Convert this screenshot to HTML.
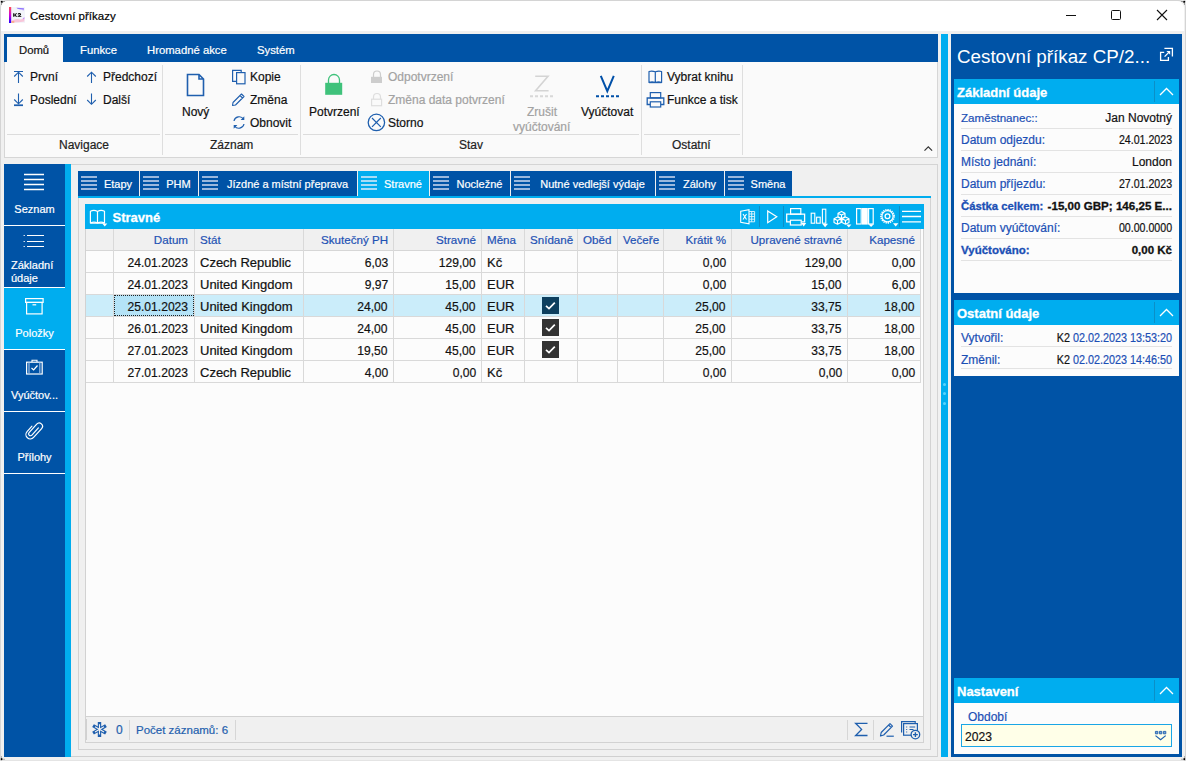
<!DOCTYPE html>
<html><head><meta charset="utf-8">
<style>
*{margin:0;padding:0;box-sizing:border-box}
html,body{width:1186px;height:761px;overflow:hidden;background:#ececec;font-family:"Liberation Sans",sans-serif;color:#111}
.a{position:absolute}
.t{position:absolute;white-space:nowrap;font-size:12px;line-height:14px;-webkit-text-stroke:0.2px currentColor}
.w{color:#fff}
.db{background:#0053a6}
.lb{background:#00adef}
svg{position:absolute;overflow:visible}
</style></head><body>
<!-- window frame -->
<div class="a" style="left:0;top:0;width:1186px;height:761px;background:#e9e9e9"></div>
<div class="a" style="left:0;top:0;width:1186px;height:761px;border:1px solid #d4d4d4;border-bottom-color:#e4e4e4;background:#f0f0f0;border-radius:7px 7px 0 0"></div>
<!-- title bar -->
<div class="a" style="left:1px;top:1px;width:1183px;height:30px;background:#fff;border-radius:7px 7px 0 0"></div>
<div id="titlebar">
<svg style="left:9px;top:7px" width="16" height="16"><defs><linearGradient id="k2g" x1="0" y1="0" x2="0" y2="1"><stop offset="0" stop-color="#ff5050"/><stop offset="0.5" stop-color="#d000d8"/><stop offset="1" stop-color="#2200ff"/></linearGradient></defs>
<rect x="2" y="0" width="14" height="16" fill="#f3f5fa"/><rect x="0" y="0" width="2.2" height="16" fill="url(#k2g)"/>
<path d="M7.5 0.8Q11 1.2 15 1.3L14.8 2.3Q11 2.6 8.5 1.8Z" fill="#7d5cff" opacity="0.85"/><circle cx="14.2" cy="2.6" r="0.9" fill="#a070ff" opacity="0.6"/>
<path d="M3 13.5Q7 11.2 10 12.2Q12.5 13 15.2 11L15.4 14.5Q10 15.6 3 15.6Z" fill="#ff80a8" opacity="0.4"/><path d="M13.6 11.6L15.6 10L15.2 12.4Z" fill="#b070ff" opacity="0.7"/><rect x="2.3" y="14" width="3" height="2" fill="#ff9a60" opacity="0.6"/>
<path d="M4.2 6.2H5.4V7.9L6.9 6.2H8.3L6.5 8L8.4 9.8H6.9L5.4 8.2V9.8H4.2Z" fill="#000"/><path d="M8.6 7.4Q8.8 6.1 10.5 6.1Q12.3 6.2 12.1 7.5Q12 8.3 10.4 8.9H12.3V9.8H8.6V9.1Q10.8 8 10.9 7.5Q10.9 7 10.4 7Q9.9 7 9.8 7.6Z" fill="#000"/>
</svg>
<div class="t" style="left:30px;top:8.5px;font-size:11.5px;color:#000">Cestovní příkazy</div>
<div class="a" style="left:1066px;top:15px;width:10px;height:1px;background:#111"></div>
<div class="a" style="left:1111px;top:10px;width:10px;height:10px;border:1px solid #111;border-radius:1.5px"></div>
<svg style="left:1157px;top:10px" width="10" height="10"><path d="M0 0L10 10M10 0L0 10" stroke="#111" stroke-width="1.1"/></svg>
</div>

<!-- ribbon -->
<div id="ribbon">
<div class="a db" style="left:4px;top:34px;width:934px;height:28px"></div>
<div class="a" style="left:7px;top:37px;width:56px;height:25px;background:#fafafa"></div>
<div class="t" style="left:19px;top:42.5px;font-size:11.3px;color:#111">Domů</div>
<div class="t w" style="left:80px;top:42.5px;font-size:11.3px">Funkce</div>
<div class="t w" style="left:147px;top:42.5px;font-size:11.3px">Hromadné akce</div>
<div class="t w" style="left:257px;top:42.5px;font-size:11.3px">Systém</div>
<div class="a" style="left:4px;top:62px;width:934px;height:96px;background:#fafafa;border:1px solid #d6d6d6;border-top:none"></div>
<!-- group separators -->
<div class="a" style="left:162px;top:65px;width:1px;height:90px;background:#dedede"></div>
<div class="a" style="left:300px;top:65px;width:1px;height:90px;background:#dedede"></div>
<div class="a" style="left:641px;top:65px;width:1px;height:90px;background:#dedede"></div>
<div class="a" style="left:742px;top:65px;width:1px;height:90px;background:#dedede"></div>
<!-- group label lines -->
<div class="a" style="left:7px;top:134px;width:153px;height:1px;background:#dcdcdc"></div>
<div class="a" style="left:165px;top:134px;width:133px;height:1px;background:#dcdcdc"></div>
<div class="a" style="left:303px;top:134px;width:336px;height:1px;background:#dcdcdc"></div>
<div class="a" style="left:644px;top:134px;width:96px;height:1px;background:#dcdcdc"></div>
<div class="t" style="left:59px;top:138px;color:#222">Navigace</div>
<div class="t" style="left:210px;top:138px;color:#222">Záznam</div>
<div class="t" style="left:459px;top:138px;color:#222">Stav</div>
<div class="t" style="left:672px;top:138px;color:#222">Ostatní</div>
<svg style="left:923.5px;top:145.5px" width="10" height="6"><path d="M0.5 4.6L4.3 0.8L8.1 4.6" fill="none" stroke="#333" stroke-width="1.2"/></svg>
<!-- Navigace -->
<svg style="left:13px;top:70px" width="11" height="14"><path d="M1 1.5H10M5.5 2V13M1.2 6.5L5.5 2.2L9.8 6.5" fill="none" stroke="#1f5fae" stroke-width="1.1"/></svg>
<div class="t" style="left:30px;top:70px">První</div>
<svg style="left:13px;top:93px" width="11" height="14"><path d="M1 12.3H10M5.5 0.5V11M1.2 6.5L5.5 10.8L9.8 6.5" fill="none" stroke="#1f5fae" stroke-width="1.1"/><path d="M1 12.3H10" stroke="#1f5fae" stroke-width="1.6"/></svg>
<div class="t" style="left:30px;top:93px">Poslední</div>
<svg style="left:86px;top:71px" width="11" height="13"><path d="M5.5 1V12M1.2 5.5L5.5 1.2L9.8 5.5" fill="none" stroke="#1f5fae" stroke-width="1.1"/></svg>
<div class="t" style="left:103px;top:70px">Předchozí</div>
<svg style="left:86px;top:93px" width="11" height="13"><path d="M5.5 0.5V11.5M1.2 7L5.5 11.3L9.8 7" fill="none" stroke="#1f5fae" stroke-width="1.1"/></svg>
<div class="t" style="left:103px;top:93px">Další</div>
<!-- Záznam -->
<svg style="left:186px;top:73px" width="19" height="24"><path d="M1.5 1.5H13L17.5 6V22.5H1.5Z M13 1.5V6H17.5" fill="none" stroke="#1f5fae" stroke-width="1.6" stroke-linejoin="miter"/></svg>
<div class="t" style="left:182px;top:105px">Nový</div>
<svg style="left:231px;top:69px" width="16" height="17"><path d="M5.2 12.3H1.6V1.4H10.2V3.4" fill="none" stroke="#1f5fae" stroke-width="1.2"/><rect x="5.6" y="3.6" width="8.4" height="11.2" fill="none" stroke="#1f5fae" stroke-width="1.2"/></svg>
<div class="t" style="left:250px;top:70px">Kopie</div>
<svg style="left:231px;top:92px" width="15" height="15"><path d="M2 10.5L10.5 2L13 4.5L4.5 13L1.5 13.5Z M9 3.5L11.5 6" fill="none" stroke="#1f5fae" stroke-width="1.1" stroke-linejoin="round"/></svg>
<div class="t" style="left:250px;top:93px">Změna</div>
<svg style="left:232px;top:115px" width="14" height="15"><path d="M2 6A5.3 5.3 0 0 1 11.5 4M12 9A5.3 5.3 0 0 1 2.5 11" fill="none" stroke="#1f5fae" stroke-width="1.2"/><path d="M12.3 1.2V5H8.6Z M1.7 13.8V10H5.4Z" fill="#1f5fae"/></svg>
<div class="t" style="left:250px;top:116px">Obnovit</div>
<!-- Stav -->
<svg style="left:325px;top:74px" width="18" height="22"><path d="M3.5 9V6A5.5 5.5 0 0 1 14.5 6V9" fill="none" stroke="#3fc27b" stroke-width="1.3"/><rect x="0.2" y="8.8" width="17" height="12" fill="#3fc27b"/></svg>
<div class="t" style="left:309px;top:105px">Potvrzení</div>
<svg style="left:371px;top:70px" width="12" height="14"><path d="M2.5 7V4.5A3.5 3.5 0 0 1 9.5 4.5V7" fill="none" stroke="#cdcdcd" stroke-width="1.2"/><rect x="0" y="6.8" width="11" height="6.2" fill="#cdcdcd"/></svg>
<div class="t" style="left:388px;top:70px;color:#a2a2a2">Odpotvrzení</div>
<svg style="left:371px;top:93px" width="12" height="14"><path d="M2.5 6V4A3.5 3.5 0 0 1 9.5 4V6" fill="none" stroke="#dedede" stroke-width="1.2"/><rect x="0.6" y="6.2" width="10" height="6.5" fill="none" stroke="#dedede" stroke-width="1.2"/></svg>
<div class="t" style="left:388px;top:93px;color:#a2a2a2">Změna data potvrzení</div>
<svg style="left:367px;top:113px" width="19" height="19"><circle cx="9.4" cy="9.4" r="8.2" fill="none" stroke="#1f5fae" stroke-width="1.3"/><path d="M5 5L13.8 13.8M13.8 5L5 13.8" stroke="#1f5fae" stroke-width="1.2"/></svg>
<div class="t" style="left:388px;top:116px">Storno</div>
<svg style="left:530px;top:75px" width="25" height="23"><path d="M5.2 1.3H18L5.6 15.8H18.6" fill="none" stroke="#d4d4d4" stroke-width="1.6" stroke-linejoin="miter"/><path d="M0 21.2H24" stroke="#d8d8d8" stroke-width="2" stroke-dasharray="3 2"/></svg>
<div class="t" style="left:527px;top:105px;color:#a2a2a2">Zrušit</div>
<div class="t" style="left:513px;top:120px;color:#a2a2a2">vyúčtování</div>
<svg style="left:596px;top:75px" width="25" height="23"><path d="M4.8 0.8L11.3 16.2L17.8 0.8" fill="none" stroke="#0050a8" stroke-width="2"/><path d="M0 21.2H24" stroke="#0050a8" stroke-width="2" stroke-dasharray="3 2"/></svg>
<div class="t" style="left:581px;top:105px">Vyúčtovat</div>
<!-- Ostatní -->
<svg style="left:648px;top:70px" width="16" height="14"><path d="M1 1.5Q4 0.5 7.3 1.8V12.5Q4 11.3 1 12.5Z M7.3 1.8Q10.6 0.5 13.6 1.5V12.5Q10.6 11.3 7.3 12.5" fill="none" stroke="#1f5fae" stroke-width="1.2" stroke-linejoin="round"/><path d="M1 12.6H13.6" stroke="#1f5fae" stroke-width="1.2"/></svg>
<div class="t" style="left:667px;top:70px">Vybrat knihu</div>
<svg style="left:646px;top:92px" width="19" height="16"><rect x="4.3" y="0.6" width="10.4" height="5.2" fill="none" stroke="#1f5fae" stroke-width="1.2"/><path d="M4 12.5H1.2V6H17.8V12.5H15" fill="none" stroke="#1f5fae" stroke-width="1.3"/><rect x="4.3" y="9.8" width="10.4" height="5.2" fill="none" stroke="#1f5fae" stroke-width="1.2"/></svg>
<div class="t" style="left:667px;top:93px">Funkce a tisk</div>
</div>

<!-- left nav -->
<div id="leftnav">
<div class="a db" style="left:4px;top:164px;width:61px;height:593px"></div>
<div class="a lb" style="left:65px;top:164px;width:6px;height:593px"></div>
<div class="a lb" style="left:4px;top:288px;width:61px;height:61px"></div>
<div class="a" style="left:4px;top:225px;width:61px;height:1px;background:#fff"></div>
<div class="a" style="left:4px;top:287px;width:61px;height:1px;background:#fff"></div>
<div class="a" style="left:4px;top:349px;width:61px;height:1px;background:#fff"></div>
<div class="a" style="left:4px;top:411px;width:61px;height:1px;background:#fff"></div>
<div class="a" style="left:4px;top:473px;width:61px;height:1px;background:#fff"></div>
<svg style="left:24px;top:173px" width="21" height="18"><path d="M0 1.5H20M0 6.5H20M0 11.5H20M0 16.5H20" stroke="#fff" stroke-width="1.3"/></svg>
<div class="t w" style="left:4px;width:61px;text-align:center;top:201.5px;font-size:11px">Seznam</div>
<svg style="left:23px;top:234px" width="22" height="14"><path d="M4 1.5H21M4 7.5H21M4 12.5H21" stroke="#fff" stroke-width="1.1"/><path d="M0.6 1.5H1.8M0.6 7.5H1.8M0.6 12.5H1.8" stroke="#fff" stroke-width="1.1"/></svg>
<div class="t w" style="left:11px;top:258px;font-size:11px">Základní</div>
<div class="t w" style="left:11px;top:271px;font-size:11px">údaje</div>
<svg style="left:25px;top:298px" width="19" height="17"><rect x="0.6" y="0.6" width="17.5" height="3.8" fill="none" stroke="#fff" stroke-width="1.2"/><rect x="1.6" y="4.4" width="15.5" height="11.5" fill="none" stroke="#fff" stroke-width="1.2"/><path d="M7.5 6.8H11.2" stroke="#fff" stroke-width="1.2"/></svg>
<div class="t w" style="left:4px;width:61px;text-align:center;top:326px;font-size:11px">Položky</div>
<svg style="left:26px;top:359px" width="17" height="16"><path d="M6 3V1.2H11V3" fill="none" stroke="#fff" stroke-width="1.1"/><rect x="0.6" y="3.2" width="15.6" height="11.8" fill="none" stroke="#fff" stroke-width="1.2"/><path d="M3 3.5V14.5M13.8 3.5V14.5" stroke="#8fb4e0" stroke-width="1.3"/><path d="M5.5 9L7.6 11L11.5 6.5" fill="none" stroke="#fff" stroke-width="1.2"/></svg>
<div class="t w" style="left:4px;width:61px;text-align:center;top:387.5px;font-size:11px">Vyúčtov...</div>
<svg style="left:24px;top:420px" width="21" height="21"><g transform="translate(10.2 10.2) rotate(42)"><path d="M1.6 -4.5V5.2A1.9 1.9 0 0 1 -2.2 5.2V-6.2A3.3 3.3 0 0 1 4.4 -6.2V5.8A4.4 4.4 0 0 1 -4.4 5.8V-1.5" fill="none" stroke="#fff" stroke-width="1.2" stroke-linecap="round"/></g></svg>
<div class="t w" style="left:4px;width:61px;text-align:center;top:449.5px;font-size:11px">Přílohy</div>
</div>

<!-- content -->
<div id="content">
<div class="a" style="left:71px;top:164px;width:867px;height:593px;background:#f0f0f0;border-top:1px solid #d4d4d4;border-right:1px solid #d4d4d4;border-bottom:1px solid #d0d0d0"></div>
<div class="a" style="left:78px;top:171px;width:61px;height:25px;background:#0053a6"></div><svg style="left:81px;top:176px" width="16" height="14"><path d="M0 1H16M0 5H16M0 9H16M0 13H16" stroke="#9bb8dd" stroke-width="2"/></svg><div class="t w" style="left:97px;width:42px;text-align:center;top:177px;font-size:11px">Etapy</div>
<div class="a" style="left:140px;top:171px;width:58px;height:25px;background:#0053a6"></div><svg style="left:143px;top:176px" width="16" height="14"><path d="M0 1H16M0 5H16M0 9H16M0 13H16" stroke="#9bb8dd" stroke-width="2"/></svg><div class="t w" style="left:159px;width:39px;text-align:center;top:177px;font-size:11px">PHM</div>
<div class="a" style="left:199px;top:171px;width:158px;height:25px;background:#0053a6"></div><svg style="left:202px;top:176px" width="16" height="14"><path d="M0 1H16M0 5H16M0 9H16M0 13H16" stroke="#9bb8dd" stroke-width="2"/></svg><div class="t w" style="left:218px;width:139px;text-align:center;top:177px;font-size:11px">Jízdné a místní přeprava</div>
<div class="a" style="left:358px;top:171px;width:71px;height:25px;background:#00adef"></div><svg style="left:361px;top:176px" width="16" height="14"><path d="M0 1H16M0 5H16M0 9H16M0 13H16" stroke="#a6dcf6" stroke-width="2"/></svg><div class="t w" style="left:377px;width:52px;text-align:center;top:177px;font-size:11px">Stravné</div>
<div class="a" style="left:430px;top:171px;width:80px;height:25px;background:#0053a6"></div><svg style="left:433px;top:176px" width="16" height="14"><path d="M0 1H16M0 5H16M0 9H16M0 13H16" stroke="#9bb8dd" stroke-width="2"/></svg><div class="t w" style="left:449px;width:61px;text-align:center;top:177px;font-size:11px">Nocležné</div>
<div class="a" style="left:511px;top:171px;width:144px;height:25px;background:#0053a6"></div><svg style="left:514px;top:176px" width="16" height="14"><path d="M0 1H16M0 5H16M0 9H16M0 13H16" stroke="#9bb8dd" stroke-width="2"/></svg><div class="t w" style="left:530px;width:125px;text-align:center;top:177px;font-size:11px">Nutné vedlejší výdaje</div>
<div class="a" style="left:656px;top:171px;width:68px;height:25px;background:#0053a6"></div><svg style="left:659px;top:176px" width="16" height="14"><path d="M0 1H16M0 5H16M0 9H16M0 13H16" stroke="#9bb8dd" stroke-width="2"/></svg><div class="t w" style="left:675px;width:49px;text-align:center;top:177px;font-size:11px">Zálohy</div>
<div class="a" style="left:725px;top:171px;width:67px;height:25px;background:#0053a6"></div><svg style="left:728px;top:176px" width="16" height="14"><path d="M0 1H16M0 5H16M0 9H16M0 13H16" stroke="#9bb8dd" stroke-width="2"/></svg><div class="t w" style="left:744px;width:48px;text-align:center;top:177px;font-size:11px">Směna</div>
<div class="a lb" style="left:78px;top:196px;width:853px;height:2px"></div>
<div class="a" style="left:78px;top:198px;width:853px;height:552px;border:1px solid #d2d2d2;border-top:none;background:#f0f0f0"></div>
<div id="grid"><div class="a" style="left:85px;top:204px;width:839px;height:25px;background:#00adef"></div>
<div class="a" style="left:85px;top:229px;width:839px;height:514px;background:#fcfcfc;border:1px solid #d2d2d2;border-top:none"></div>
<div class="a" style="left:86px;top:229px;width:834px;height:21px;background:#f0f0f0"></div>
<div class="a" style="left:86px;top:250px;width:834px;height:1px;background:#d6d6d6"></div>
<div class="a" style="left:86px;top:295px;width:834px;height:21px;background:#cbedfa"></div>
<div class="a" style="left:114px;top:295px;width:80px;height:21px;background:#b4e3f7;border:1px dotted #222"></div>
<div class="a" style="left:86px;top:272px;width:834px;height:1px;background:#d9d9d9"></div>
<div class="a" style="left:86px;top:294px;width:834px;height:1px;background:#d9d9d9"></div>
<div class="a" style="left:86px;top:316px;width:834px;height:1px;background:#d9d9d9"></div>
<div class="a" style="left:86px;top:338px;width:834px;height:1px;background:#d9d9d9"></div>
<div class="a" style="left:86px;top:360px;width:834px;height:1px;background:#d9d9d9"></div>
<div class="a" style="left:86px;top:382px;width:834px;height:1px;background:#d9d9d9"></div>
<div class="a" style="left:113px;top:229px;width:1px;height:154px;background:#d9d9d9"></div>
<div class="a" style="left:194px;top:229px;width:1px;height:154px;background:#d9d9d9"></div>
<div class="a" style="left:303px;top:229px;width:1px;height:154px;background:#d9d9d9"></div>
<div class="a" style="left:393px;top:229px;width:1px;height:154px;background:#d9d9d9"></div>
<div class="a" style="left:481px;top:229px;width:1px;height:154px;background:#d9d9d9"></div>
<div class="a" style="left:524px;top:229px;width:1px;height:154px;background:#d9d9d9"></div>
<div class="a" style="left:577px;top:229px;width:1px;height:154px;background:#d9d9d9"></div>
<div class="a" style="left:617px;top:229px;width:1px;height:154px;background:#d9d9d9"></div>
<div class="a" style="left:663px;top:229px;width:1px;height:154px;background:#d9d9d9"></div>
<div class="a" style="left:731px;top:229px;width:1px;height:154px;background:#d9d9d9"></div>
<div class="a" style="left:847px;top:229px;width:1px;height:154px;background:#d9d9d9"></div>
<div class="a" style="left:920px;top:229px;width:1px;height:154px;background:#d9d9d9"></div>
<div class="t" style="right:998px;top:232.5px;font-size:11.6px;color:#1e52b4">Datum</div>
<div class="t" style="left:200px;top:232.5px;font-size:11.6px;color:#1e52b4">Stát</div>
<div class="t" style="right:798px;top:232.5px;font-size:11.6px;color:#1e52b4">Skutečný PH</div>
<div class="t" style="right:710px;top:232.5px;font-size:11.6px;color:#1e52b4">Stravné</div>
<div class="t" style="left:487px;top:232.5px;font-size:11.6px;color:#1e52b4">Měna</div>
<div class="t" style="left:530px;top:232.5px;font-size:11.6px;color:#1e52b4">Snídaně</div>
<div class="t" style="left:583px;top:232.5px;font-size:11.6px;color:#1e52b4">Oběd</div>
<div class="t" style="left:623px;top:232.5px;font-size:11.6px;color:#1e52b4">Večeře</div>
<div class="t" style="right:460px;top:232.5px;font-size:11.6px;color:#1e52b4">Krátit %</div>
<div class="t" style="right:344px;top:232.5px;font-size:11.6px;color:#1e52b4">Upravené stravné</div>
<div class="t" style="right:271px;top:232.5px;font-size:11.6px;color:#1e52b4">Kapesné</div>
<div class="t" style="right:998px;top:254.7px;font-size:13px;line-height:16px;color:#111;transform:scaleX(.93);transform-origin:100% 50%">24.01.2023</div>
<div class="t" style="left:200px;top:254.7px;font-size:13px;line-height:16px;color:#111">Czech Republic</div>
<div class="t" style="right:798px;top:254.7px;font-size:13px;line-height:16px;color:#111;transform:scaleX(.93);transform-origin:100% 50%">6,03</div>
<div class="t" style="right:710px;top:254.7px;font-size:13px;line-height:16px;color:#111;transform:scaleX(.93);transform-origin:100% 50%">129,00</div>
<div class="t" style="left:487px;top:254.7px;font-size:13px;line-height:16px;color:#111">Kč</div>
<div class="t" style="right:460px;top:254.7px;font-size:13px;line-height:16px;color:#111;transform:scaleX(.93);transform-origin:100% 50%">0,00</div>
<div class="t" style="right:344px;top:254.7px;font-size:13px;line-height:16px;color:#111;transform:scaleX(.93);transform-origin:100% 50%">129,00</div>
<div class="t" style="right:271px;top:254.7px;font-size:13px;line-height:16px;color:#111;transform:scaleX(.93);transform-origin:100% 50%">0,00</div>
<div class="t" style="right:998px;top:276.7px;font-size:13px;line-height:16px;color:#111;transform:scaleX(.93);transform-origin:100% 50%">24.01.2023</div>
<div class="t" style="left:200px;top:276.7px;font-size:13px;line-height:16px;color:#111">United Kingdom</div>
<div class="t" style="right:798px;top:276.7px;font-size:13px;line-height:16px;color:#111;transform:scaleX(.93);transform-origin:100% 50%">9,97</div>
<div class="t" style="right:710px;top:276.7px;font-size:13px;line-height:16px;color:#111;transform:scaleX(.93);transform-origin:100% 50%">15,00</div>
<div class="t" style="left:487px;top:276.7px;font-size:13px;line-height:16px;color:#111">EUR</div>
<div class="t" style="right:460px;top:276.7px;font-size:13px;line-height:16px;color:#111;transform:scaleX(.93);transform-origin:100% 50%">0,00</div>
<div class="t" style="right:344px;top:276.7px;font-size:13px;line-height:16px;color:#111;transform:scaleX(.93);transform-origin:100% 50%">15,00</div>
<div class="t" style="right:271px;top:276.7px;font-size:13px;line-height:16px;color:#111;transform:scaleX(.93);transform-origin:100% 50%">6,00</div>
<div class="t" style="right:998px;top:298.7px;font-size:13px;line-height:16px;color:#111;transform:scaleX(.93);transform-origin:100% 50%">25.01.2023</div>
<div class="t" style="left:200px;top:298.7px;font-size:13px;line-height:16px;color:#111">United Kingdom</div>
<div class="t" style="right:798px;top:298.7px;font-size:13px;line-height:16px;color:#111;transform:scaleX(.93);transform-origin:100% 50%">24,00</div>
<div class="t" style="right:710px;top:298.7px;font-size:13px;line-height:16px;color:#111;transform:scaleX(.93);transform-origin:100% 50%">45,00</div>
<div class="t" style="left:487px;top:298.7px;font-size:13px;line-height:16px;color:#111">EUR</div>
<svg style="left:542px;top:297px" width="17" height="17"><rect width="17" height="17" fill="#0d3f5e"/><path d="M4 8.8L7 11.6L12.8 5.6" fill="none" stroke="#fff" stroke-width="1.7"/></svg>
<div class="t" style="right:460px;top:298.7px;font-size:13px;line-height:16px;color:#111;transform:scaleX(.93);transform-origin:100% 50%">25,00</div>
<div class="t" style="right:344px;top:298.7px;font-size:13px;line-height:16px;color:#111;transform:scaleX(.93);transform-origin:100% 50%">33,75</div>
<div class="t" style="right:271px;top:298.7px;font-size:13px;line-height:16px;color:#111;transform:scaleX(.93);transform-origin:100% 50%">18,00</div>
<div class="t" style="right:998px;top:320.7px;font-size:13px;line-height:16px;color:#111;transform:scaleX(.93);transform-origin:100% 50%">26.01.2023</div>
<div class="t" style="left:200px;top:320.7px;font-size:13px;line-height:16px;color:#111">United Kingdom</div>
<div class="t" style="right:798px;top:320.7px;font-size:13px;line-height:16px;color:#111;transform:scaleX(.93);transform-origin:100% 50%">24,00</div>
<div class="t" style="right:710px;top:320.7px;font-size:13px;line-height:16px;color:#111;transform:scaleX(.93);transform-origin:100% 50%">45,00</div>
<div class="t" style="left:487px;top:320.7px;font-size:13px;line-height:16px;color:#111">EUR</div>
<svg style="left:542px;top:319px" width="17" height="17"><rect width="17" height="17" fill="#333"/><path d="M4 8.8L7 11.6L12.8 5.6" fill="none" stroke="#fff" stroke-width="1.7"/></svg>
<div class="t" style="right:460px;top:320.7px;font-size:13px;line-height:16px;color:#111;transform:scaleX(.93);transform-origin:100% 50%">25,00</div>
<div class="t" style="right:344px;top:320.7px;font-size:13px;line-height:16px;color:#111;transform:scaleX(.93);transform-origin:100% 50%">33,75</div>
<div class="t" style="right:271px;top:320.7px;font-size:13px;line-height:16px;color:#111;transform:scaleX(.93);transform-origin:100% 50%">18,00</div>
<div class="t" style="right:998px;top:342.7px;font-size:13px;line-height:16px;color:#111;transform:scaleX(.93);transform-origin:100% 50%">27.01.2023</div>
<div class="t" style="left:200px;top:342.7px;font-size:13px;line-height:16px;color:#111">United Kingdom</div>
<div class="t" style="right:798px;top:342.7px;font-size:13px;line-height:16px;color:#111;transform:scaleX(.93);transform-origin:100% 50%">19,50</div>
<div class="t" style="right:710px;top:342.7px;font-size:13px;line-height:16px;color:#111;transform:scaleX(.93);transform-origin:100% 50%">45,00</div>
<div class="t" style="left:487px;top:342.7px;font-size:13px;line-height:16px;color:#111">EUR</div>
<svg style="left:542px;top:341px" width="17" height="17"><rect width="17" height="17" fill="#333"/><path d="M4 8.8L7 11.6L12.8 5.6" fill="none" stroke="#fff" stroke-width="1.7"/></svg>
<div class="t" style="right:460px;top:342.7px;font-size:13px;line-height:16px;color:#111;transform:scaleX(.93);transform-origin:100% 50%">25,00</div>
<div class="t" style="right:344px;top:342.7px;font-size:13px;line-height:16px;color:#111;transform:scaleX(.93);transform-origin:100% 50%">33,75</div>
<div class="t" style="right:271px;top:342.7px;font-size:13px;line-height:16px;color:#111;transform:scaleX(.93);transform-origin:100% 50%">18,00</div>
<div class="t" style="right:998px;top:364.7px;font-size:13px;line-height:16px;color:#111;transform:scaleX(.93);transform-origin:100% 50%">27.01.2023</div>
<div class="t" style="left:200px;top:364.7px;font-size:13px;line-height:16px;color:#111">Czech Republic</div>
<div class="t" style="right:798px;top:364.7px;font-size:13px;line-height:16px;color:#111;transform:scaleX(.93);transform-origin:100% 50%">4,00</div>
<div class="t" style="right:710px;top:364.7px;font-size:13px;line-height:16px;color:#111;transform:scaleX(.93);transform-origin:100% 50%">0,00</div>
<div class="t" style="left:487px;top:364.7px;font-size:13px;line-height:16px;color:#111">Kč</div>
<div class="t" style="right:460px;top:364.7px;font-size:13px;line-height:16px;color:#111;transform:scaleX(.93);transform-origin:100% 50%">0,00</div>
<div class="t" style="right:344px;top:364.7px;font-size:13px;line-height:16px;color:#111;transform:scaleX(.93);transform-origin:100% 50%">0,00</div>
<div class="t" style="right:271px;top:364.7px;font-size:13px;line-height:16px;color:#111;transform:scaleX(.93);transform-origin:100% 50%">0,00</div>
<div class="a" style="left:86px;top:716px;width:837px;height:1px;background:#d2d2d2"></div>
<div class="a" style="left:86px;top:717px;width:837px;height:25px;background:#f0f0f0"></div>
<div class="a" style="left:129px;top:720px;width:1px;height:20px;background:#d6d6d6"></div>
<div class="a" style="left:235px;top:720px;width:1px;height:20px;background:#d6d6d6"></div>
<div class="a" style="left:847px;top:720px;width:1px;height:20px;background:#d6d6d6"></div>
<div class="a" style="left:873px;top:720px;width:1px;height:20px;background:#d6d6d6"></div></div>
<div id="icons">
<svg style="left:89px;top:209px" width="20" height="19"><path d="M1.4 2.2Q5 0.4 8.5 2.4V14Q5 12.4 1.4 14Z M8.5 2.4Q12 0.4 15.5 2.2V14Q12 12.4 8.5 14" fill="none" stroke="#fff" stroke-width="1.2" stroke-linejoin="round"/><path d="M1.4 14.2H15.5" stroke="#fff" stroke-width="1.1"/><path d="M13.2 14.6H18.3L15.75 17.4Z" fill="#fff"/></svg>
<div class="t w" style="left:112.5px;top:209.5px;font-size:13px;line-height:16px;font-weight:700;-webkit-text-stroke:0.3px currentColor">Stravné</div>
<svg style="left:740px;top:209px" width="16" height="16"><path d="M0.7 2.2L9 0.7V14.8L0.7 13.3Z" fill="none" stroke="#fff" stroke-width="1.1"/><path d="M9 2.5H14.6V12.8H9M9 5H14.6M9 7.6H14.6M9 10.2H14.6M11.7 2.5V12.8" fill="none" stroke="#e8f7fd" stroke-width="0.9"/><path d="M3 5L6.5 10.5M6.5 5L3 10.5" stroke="#fff" stroke-width="1.1"/></svg>
<div class="a" style="left:759px;top:206px;width:1px;height:21px;background:#0b8fc7"></div>
<svg style="left:767px;top:210px" width="11" height="14"><path d="M0.7 0.9L9.8 6.8L0.7 12.7Z" fill="none" stroke="#fff" stroke-width="1.2" stroke-linejoin="miter"/></svg>
<div class="a" style="left:783px;top:206px;width:1px;height:21px;background:#0b8fc7"></div>
<svg style="left:786px;top:208px" width="21" height="20"><rect x="4.6" y="0.6" width="10.2" height="5.6" fill="none" stroke="#fff" stroke-width="1.2"/><path d="M4 13.8H0.7V6.2H18.6V13.8H15.5" fill="none" stroke="#fff" stroke-width="1.3"/><rect x="4.4" y="12.2" width="10.8" height="4.8" fill="none" stroke="#fff" stroke-width="1.2"/><path d="M15.2 15H20.2L17.7 18.6Z" fill="#fff"/></svg>
<svg style="left:810px;top:208px" width="19" height="20"><rect x="1.2" y="5.2" width="3.6" height="10" fill="none" stroke="#fff" stroke-width="1.1"/><rect x="6.6" y="9.2" width="3.6" height="6" fill="none" stroke="#fff" stroke-width="1.1"/><rect x="12.4" y="1.2" width="3.4" height="14" fill="none" stroke="#fff" stroke-width="1.1"/><path d="M12.2 15.8H18L15.1 19.2Z" fill="#fff"/></svg>
<svg style="left:833px;top:209px" width="19" height="19"><path d="M5 4.2L8.5 2.4L12 4.2V7.8L8.5 9.6L5 7.8Z M5 4.2L8.5 6L12 4.2M8.5 6V9.6 M1 9.8L4.5 8L8 9.8V13.4L4.5 15.2L1 13.4Z M1 9.8L4.5 11.6L8 9.8M4.5 11.6V15.2 M9 9.8L12.5 8L16 9.8V13.4L12.5 15.2L9 13.4Z M9 9.8L12.5 11.6L16 9.8M12.5 11.6V15.2" fill="none" stroke="#fff" stroke-width="1.1" stroke-linejoin="round"/><path d="M13.2 15.4H18.4L15.8 18.4Z" fill="#fff"/></svg>
<svg style="left:856px;top:208px" width="19" height="20"><rect x="0.6" y="0.6" width="4.6" height="15.4" fill="none" stroke="#fff" stroke-width="1.2"/><rect x="6" y="0" width="5.8" height="16.6" fill="#fff"/><rect x="12.6" y="0.6" width="4.6" height="15.4" fill="none" stroke="#fff" stroke-width="1.2"/><path d="M12.4 16.2H17.8L15.1 19Z" fill="#fff"/></svg>
<svg style="left:879px;top:208px" width="20" height="20"><circle cx="8.5" cy="8.3" r="6.6" fill="none" stroke="#fff" stroke-width="1.6" stroke-dasharray="1.3 0.9"/><circle cx="8.5" cy="8.3" r="5.6" fill="none" stroke="#fff" stroke-width="1.2"/><circle cx="8.5" cy="8.3" r="2.4" fill="none" stroke="#fff" stroke-width="1.3"/><path d="M14 15.2H19.4L16.7 18.6Z" fill="#fff"/></svg>
<div class="a" style="left:899px;top:206px;width:1px;height:21px;background:#0b8fc7"></div>
<svg style="left:902px;top:210px" width="20" height="13"><path d="M0 1.3H19M0 6.5H19M0 11.8H19" stroke="#fff" stroke-width="1.3"/></svg>
<svg style="left:90px;top:720px" width="19" height="19"><g transform="translate(9.5 9.4)"><path d="M0 -5.8V5.8M-5 -2.9L5 2.9M5 -2.9L-5 2.9" stroke="#1f5fae" stroke-width="3.4" stroke-linecap="square"/><path d="M0 -5.2V5.2M-4.5 -2.6L4.5 2.6M4.5 -2.6L-4.5 2.6" stroke="#f0f0f0" stroke-width="1.1" stroke-linecap="butt"/></g></svg><div class="a" style="left:86px;top:719px;width:1px;height:21px;background:#d0d0d0"></div>
<div class="t" style="left:116px;top:723px;color:#1f5fae">0</div>
<div class="t" style="left:136px;top:723px;font-size:11.5px;color:#1f5fae">Počet záznamů: 6</div>
<svg style="left:853.5px;top:722px" width="15" height="15"><path d="M13.5 1.3H1.6L7.6 7.4L1.6 13.5H13.5" fill="none" stroke="#1f5fae" stroke-width="1.3"/></svg>
<svg style="left:879px;top:721px" width="17" height="17"><path d="M1.5 15L2.2 11.5L11 2.7L13.5 5.2L4.7 14Z M9.6 4L12.2 6.6" fill="none" stroke="#1f5fae" stroke-width="1.2" stroke-linejoin="round"/><path d="M7.5 15.2H14.8" stroke="#1f5fae" stroke-width="1.2"/></svg>
<svg style="left:900px;top:720px" width="22" height="21"><path d="M1.6 12.5V1.6H15.2V3.2" fill="none" stroke="#1f5fae" stroke-width="1.2"/><rect x="3.6" y="3.6" width="13.8" height="11.6" fill="none" stroke="#1f5fae" stroke-width="1.2"/><path d="M9.5 7H15.2M9.5 9.5H13.5" stroke="#1f5fae" stroke-width="1.1"/><path d="M6.2 7H7.2M6.2 9.5H7.2M6.2 12H7.2" stroke="#1f5fae" stroke-width="1.1"/><circle cx="15.4" cy="14.6" r="4.3" fill="#f0f0f0" stroke="#1f5fae" stroke-width="1.3"/><path d="M15.4 12.2V17M13 14.6H17.8" stroke="#1f5fae" stroke-width="1.4"/></svg>
</div>

</div>

<!-- right panel -->
<div id="right">
<div class="a lb" style="left:941px;top:34px;width:7px;height:723px"></div>
<div class="a" style="left:943.2px;top:383.3px;width:3px;height:3px;border-radius:50%;background:#5ad2fc"></div>
<div class="a" style="left:943.2px;top:392.3px;width:3px;height:3px;border-radius:50%;background:#5ad2fc"></div>
<div class="a" style="left:943.2px;top:401.6px;width:3px;height:3px;border-radius:50%;background:#5ad2fc"></div>
<div class="a db" style="left:951px;top:34px;width:231px;height:723px"></div>
<div class="t w" style="left:957px;top:46px;font-size:18.8px;-webkit-text-stroke:0;line-height:22px">Cestovní příkaz CP/2...</div>
<svg style="left:1159px;top:47px" width="16" height="16"><path d="M5.2 5.4H1.6V13.4H9.4V10" fill="none" stroke="#fff" stroke-width="1.3"/><path d="M5.4 1.4H13.4V9.6" fill="none" stroke="#fff" stroke-width="1.3"/><path d="M5.6 9.6L9.8 5.4" stroke="#fff" stroke-width="1.3"/><path d="M7.4 3.9H11.2V7.7Z" fill="#fff"/></svg>
<!-- Základní údaje -->
<div class="a lb" style="left:954px;top:79px;width:225px;height:25px"></div>
<div class="t w" style="left:957px;top:84.7px;font-size:13px;line-height:16px;font-weight:700;-webkit-text-stroke:0.3px currentColor">Základní údaje</div>
<div class="a" style="left:1154px;top:81px;width:1px;height:21px;background:#0b8fc7"></div>
<svg style="left:1159px;top:87px" width="16" height="9"><path d="M1 8L7.5 1.5L14 8" fill="none" stroke="#fff" stroke-width="1.3"/></svg>
<div class="a" style="left:954px;top:104px;width:225px;height:189px;background:#fcfcfc"></div>
<div class="t" style="left:961px;top:111px;font-size:11.6px;color:#1b4fb5">Zaměstnanec::</div>
<div class="t" style="right:14px;top:111px;color:#111">Jan Novotný</div>
<div class="a" style="left:961px;top:128px;width:211px;height:1px;background:#e3e3e3"></div>
<div class="t" style="left:961px;top:133px;color:#1b4fb5">Datum odjezdu:</div>
<div class="t" style="right:14px;top:133px;color:#111;transform:scaleX(.885);transform-origin:100% 50%">24.01.2023</div>
<div class="a" style="left:961px;top:150px;width:211px;height:1px;background:#e3e3e3"></div>
<div class="t" style="left:961px;top:155px;color:#1b4fb5">Místo jednání:</div>
<div class="t" style="right:14px;top:155px;color:#111">London</div>
<div class="a" style="left:961px;top:172px;width:211px;height:1px;background:#e3e3e3"></div>
<div class="t" style="left:961px;top:177px;color:#1b4fb5">Datum příjezdu:</div>
<div class="t" style="right:14px;top:177px;color:#111;transform:scaleX(.885);transform-origin:100% 50%">27.01.2023</div>
<div class="a" style="left:961px;top:194px;width:211px;height:1px;background:#e3e3e3"></div>
<div class="t" style="left:961px;top:199px;font-weight:700;-webkit-text-stroke:0.3px currentColor;font-size:11.3px;color:#1b4fb5">Částka celkem:</div>
<div class="t" style="right:14px;top:199px;font-weight:700;-webkit-text-stroke:0.3px currentColor;font-size:11.6px;color:#111">-15,00 GBP; 146,25 E...</div>
<div class="a" style="left:961px;top:216px;width:211px;height:1px;background:#e3e3e3"></div>
<div class="t" style="left:961px;top:221px;color:#1b4fb5">Datum vyúčtování:</div>
<div class="t" style="right:14px;top:221px;color:#111;transform:scaleX(.885);transform-origin:100% 50%">00.00.0000</div>
<div class="a" style="left:961px;top:238px;width:211px;height:1px;background:#e3e3e3"></div>
<div class="t" style="left:961px;top:243px;font-weight:700;-webkit-text-stroke:0.3px currentColor;font-size:11.5px;color:#1b4fb5">Vyúčtováno:</div>
<div class="t" style="right:14px;top:243px;font-weight:700;-webkit-text-stroke:0.3px currentColor;font-size:11.5px;color:#111">0,00 Kč</div>
<div class="a" style="left:961px;top:260px;width:211px;height:1px;background:#e3e3e3"></div>
<!-- Ostatní údaje -->
<div class="a lb" style="left:954px;top:300px;width:225px;height:25px"></div>
<div class="t w" style="left:957px;top:305.7px;font-size:13px;line-height:16px;font-weight:700;-webkit-text-stroke:0.3px currentColor">Ostatní údaje</div>
<div class="a" style="left:1154px;top:302px;width:1px;height:21px;background:#0b8fc7"></div>
<svg style="left:1159px;top:308px" width="16" height="9"><path d="M1 8L7.5 1.5L14 8" fill="none" stroke="#fff" stroke-width="1.3"/></svg>
<div class="a" style="left:954px;top:325px;width:225px;height:51px;background:#fcfcfc"></div>
<div class="a" style="left:961px;top:346px;width:211px;height:1px;background:#e3e3e3"></div>
<div class="a" style="left:961px;top:368px;width:211px;height:1px;background:#e3e3e3"></div>
<div class="t" style="left:961px;top:331px;color:#1b4fb5">Vytvořil:</div>
<div class="t" style="right:14px;top:331px;color:#1b4fb5;transform:scaleX(.9);transform-origin:100% 50%"><span style="color:#111">K2</span> 02.02.2023 13:53:20</div>
<div class="t" style="left:961px;top:353px;color:#1b4fb5">Změnil:</div>
<div class="t" style="right:14px;top:353px;color:#1b4fb5;transform:scaleX(.9);transform-origin:100% 50%"><span style="color:#111">K2</span> 02.02.2023 14:46:50</div>
<!-- Nastavení -->
<div class="a lb" style="left:954px;top:678px;width:225px;height:25px"></div>
<div class="t w" style="left:957px;top:683.7px;font-size:13px;line-height:16px;font-weight:700;-webkit-text-stroke:0.3px currentColor">Nastavení</div>
<div class="a" style="left:1154px;top:680px;width:1px;height:21px;background:#0b8fc7"></div>
<svg style="left:1159px;top:686px" width="16" height="9"><path d="M1 8L7.5 1.5L14 8" fill="none" stroke="#fff" stroke-width="1.3"/></svg>
<div class="a" style="left:954px;top:703px;width:225px;height:51px;background:#fcfcfc"></div>
<div class="t" style="left:968px;top:710px;color:#1b4fb5">Období</div>
<div class="a" style="left:961px;top:724px;width:211px;height:23px;background:#ffffe8;border:1px solid #1aa6e6"></div>
<div class="t" style="left:962.5px;top:729px;font-size:13px;line-height:16px;color:#111;transform:scaleX(.93);transform-origin:100% 50%">2023</div>
<svg style="left:1154px;top:730px" width="13" height="12"><path d="M1.4 1.4H3.8V3.8H1.4Z M5.4 1.4H7.8V3.8H5.4Z M9.4 1.4H11.8V3.8H9.4Z" fill="#7aa6d6" stroke="#1f5fae" stroke-width="0.9"/><path d="M1.5 5.6L6.6 9.8L11.7 5.6" fill="none" stroke="#1f5fae" stroke-width="1.2"/></svg>
</div>

<svg style="left:0;top:0" width="6" height="6"><ellipse cx="1.8" cy="1.8" rx="1.1" ry="1.1" fill="#000"/><path d="M2 1.5H5M1.5 2V5" stroke="#555" stroke-width="0.8" opacity="0.6"/></svg>
<svg style="left:1180px;top:0" width="6" height="6"><ellipse cx="4.2" cy="1.8" rx="1.1" ry="1.1" fill="#000"/><path d="M1 1.5H4M4.5 2V5" stroke="#555" stroke-width="0.8" opacity="0.6"/></svg>
<svg style="left:0;top:755px" width="6" height="6"><ellipse cx="1.6" cy="4.1" rx="0.9" ry="1.2" fill="#000"/><path d="M2 4.3H5M1.5 1V3.5" stroke="#555" stroke-width="0.8" opacity="0.5"/></svg>
<svg style="left:1180px;top:755px" width="6" height="6"><ellipse cx="4.3" cy="4.1" rx="0.9" ry="1.2" fill="#000"/><path d="M1 4.3H4M4.5 1V3.5" stroke="#555" stroke-width="0.8" opacity="0.5"/></svg>
</body></html>
